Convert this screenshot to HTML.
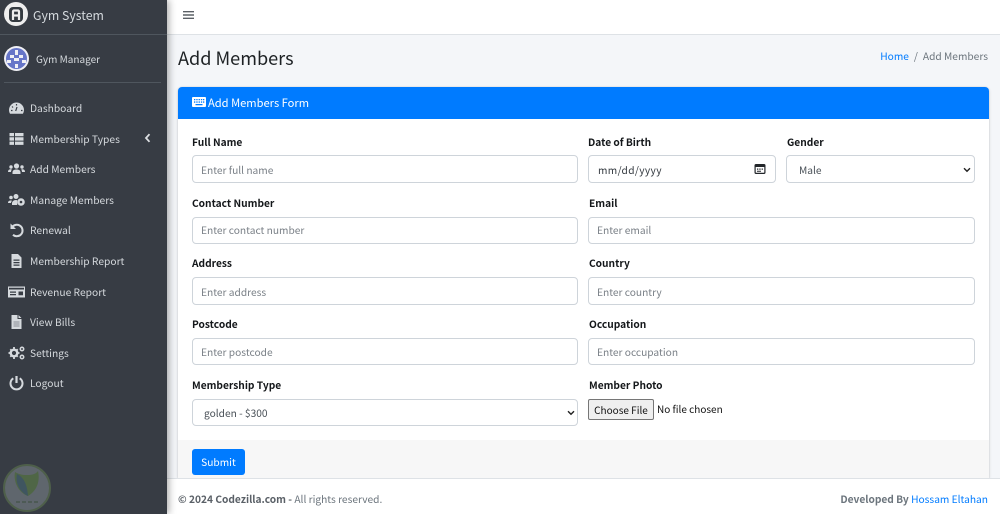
<!DOCTYPE html>
<html lang="en">
<head>
<meta charset="utf-8">
<title>Add Members</title>
<style>
*{box-sizing:border-box}
html,body{margin:0;padding:0;width:1000px;height:514px;overflow:hidden;background:#f4f6f9;font-family:"Noto Sans CJK SC","Liberation Sans",sans-serif}
.a{position:absolute;white-space:nowrap}
#side{position:absolute;z-index:5;left:0;top:0;width:167px;height:514px;background:#373c44;box-shadow:2px 0 7px rgba(0,0,0,.32)}
.nav{position:absolute;left:30px;color:#d6dade;font-size:10.25px;line-height:16px;white-space:nowrap}
.ic{position:absolute;left:8px;width:17px;height:16px;fill:#d6dade}
.lab{position:absolute;font-size:10.2px;font-weight:700;color:#14171a;line-height:16px;white-space:nowrap}
.inp{position:absolute;height:28px;background:#fff;border:1px solid #ced4da;border-radius:4px;font-size:10.2px;line-height:28px;padding-left:8px;color:#7a8087;white-space:nowrap}
.dark{color:#495057}
</style>
</head>
<body>
<div class="a" style="left:167px;top:0;width:833px;height:35px;background:#fff;border-bottom:1px solid #dee2e6"></div>
<svg class="a" style="left:183px;top:10px" width="11" height="10" viewBox="0 0 11 10"><path d="M0 1h11v1.400H0zM0 4.300h11v1.400H0zM0 7.600h11V9H0z" fill="#5b6066"/></svg>

<div id="side">
  <div class="a" style="left:0;top:34px;width:167px;height:1px;background:#4f565e"></div>
  <svg class="a" style="left:4px;top:2px" width="24" height="24" viewBox="0 0 24 24"><circle cx="12" cy="12" r="12" fill="#eeeeee"/><rect x="5" y="5" width="14" height="15" rx="4" fill="#343a40"/><path d="M9 18V9.500a1 1 0 0 1 1-1h4a1 1 0 0 1 1 1V18M9 13.500h6" fill="none" stroke="#eeeeee" stroke-width="2.200"/></svg>
  <div class="a" style="left:33px;top:6px;color:#d5dade;font-size:12.3px;line-height:18px">Gym System</div>
  <svg class="a" style="left:4px;top:46px" width="25" height="25" viewBox="0 0 25 25"><circle cx="12.500" cy="12.500" r="12.500" fill="#f0f0f5"/><circle cx="12.500" cy="12.500" r="10.500" fill="#6675c8"/><path d="M6 9h4v3H6zM15 9h4v3h-4zM11 4h3v5h-3zM10 12h5v3h-5zM3 14h4v3H3zM18 14h4v3h-4zM11 18h3v4h-3z" fill="#f0f0f5"/></svg>
  <div class="a" style="left:36px;top:51px;color:#d6dade;font-size:10px;line-height:16px">Gym Manager</div>
  <div class="a" style="left:4px;top:82px;width:157px;height:1px;background:#4f565e"></div>

  <svg class="ic" style="top:100px" viewBox="0 0 17 16"><path d="M8.500 2.500a7.500 7.500 0 0 0-7.500 7.500c0 1.400.4 2.700 1.100 3.800h12.800A7.500 7.500 0 0 0 16 10a7.500 7.500 0 0 0-7.500-7.500z"/><path d="M9 7l-1.300 4M8.500 4v1.500M4 6.500l1 1M3 10.500h1.500M13 10.500h1.500" stroke="#373c44" stroke-width="1.200" fill="none"/></svg>
  <div class="nav" style="top:100px">Dashboard</div>

  <svg class="ic" style="top:131px" viewBox="0 0 17 16"><path d="M1.500 2h4.500v3.300H1.500zM7 2h8.500v3.300H7zM1.500 6.300h4.500v3.300H1.500zM7 6.300h8.500v3.300H7zM1.500 10.600h4.500v3.300H1.500zM7 10.600h8.500v3.300H7z"/></svg>
  <div class="nav" style="top:131px">Membership Types</div>
  <svg class="a" style="left:144px;top:133px" width="7" height="10" viewBox="0 0 7 10"><path d="M5.500 1.200L2 5l3.500 3.800" fill="none" stroke="#dde0e3" stroke-width="1.800"/></svg>

  <svg class="ic" style="top:161px" viewBox="0 0 17 16"><circle cx="8.500" cy="5" r="2.600"/><circle cx="3" cy="6" r="1.700"/><circle cx="14" cy="6" r="1.700"/><path d="M4.500 13v-1.500C4.500 9.500 6 8.500 8.500 8.500s4 1 4 3V13zM0 11c0-1.800 1-2.700 3-2.700l.9.300c-.6.700-.9 1.500-.9 2.400zM17 11c0-1.800-1-2.700-3-2.700l-.9.300c.6.700.9 1.500.9 2.400z"/></svg>
  <div class="nav" style="top:161px">Add Members</div>

  <svg class="ic" style="top:192px" viewBox="0 0 17 16"><circle cx="3" cy="5.500" r="1.800"/><circle cx="8" cy="4.500" r="2.500"/><path d="M0 11c0-1.800 1-2.500 3-2.500l1 .3C3.500 9.500 3 10.300 3 11zM4 13v-1.500C4 9.500 5.500 8 8 8l1.200.2V13z"/><circle cx="13" cy="10" r="3.800"/><circle cx="13" cy="10" r="1.300" fill="#373c44"/></svg>
  <div class="nav" style="top:192px">Manage Members</div>

  <svg class="ic" style="top:222px" viewBox="0 0 17 16"><path d="M4 5.500A5.700 5.700 0 1 1 5 12.700" fill="none" stroke="#d6dade" stroke-width="2"/><path d="M2.500 1.500v5.500H8z"/></svg>
  <div class="nav" style="top:222px">Renewal</div>

  <svg class="ic" style="top:253px" viewBox="0 0 17 16"><path fill-rule="evenodd" d="M3.500 1h6.500l3.500 3.500V15h-10zM5.500 6.500v1.200h6V6.500zM5.500 9v1.200h6V9zM5.500 11.500v1.200h6v-1.200z"/></svg>
  <div class="nav" style="top:253px">Membership Report</div>

  <svg class="ic" style="top:284px" viewBox="0 0 17 16"><path fill-rule="evenodd" d="M0 2.500h17v11H0zM1 5.500h15V3.800H1zM2 7.500v1.300h6V7.500zM2 10v1.300h6V10zM10.500 7.500v3.800h4.500V7.500z"/></svg>
  <div class="nav" style="top:284px">Revenue Report</div>

  <svg class="ic" style="top:314px" viewBox="0 0 17 16"><path d="M3.500 1h6v4h4v10h-10zM10.500 1l3 3h-3z"/><path d="M5.500 8h6M5.500 10h6M5.500 12h6" stroke="#8a8f96" stroke-width=".9"/></svg>
  <div class="nav" style="top:314px">View Bills</div>

  <svg class="ic" style="top:345px" viewBox="0 0 17 16"><circle cx="6" cy="8" r="3.300" fill="none" stroke="#d6dade" stroke-width="2.400"/><path d="M6 2v2.500M6 11.500V14M.5 8H3M9 8h2.500M2.300 4.300l1.500 1.500M8.200 10.200l1.500 1.500M2.300 11.700l1.500-1.500M8.200 5.800l1.500-1.500" stroke="#d6dade" stroke-width="1.800"/><circle cx="14" cy="4" r="1.700" fill="none" stroke="#d6dade" stroke-width="1.500"/><circle cx="14" cy="12" r="1.700" fill="none" stroke="#d6dade" stroke-width="1.500"/></svg>
  <div class="nav" style="top:345px">Settings</div>

  <svg class="ic" style="top:375px" viewBox="0 0 17 16"><path d="M5.300 3.300a6 6 0 1 0 6.400 0" fill="none" stroke="#d6dade" stroke-width="2"/><path d="M8.500 1v7" stroke="#d6dade" stroke-width="2.200"/></svg>
  <div class="nav" style="top:375px">Logout</div>

  <svg class="a" style="left:2px;top:463px" width="49" height="50" viewBox="0 0 49 50"><circle cx="25" cy="25" r="23" fill="#5f666d" stroke="#4e5f4a" stroke-width="2"/><path d="M13 9c5 3 9 3 12 3s8 0 11-4c2 9 0 19-10 25C17 30 11 19 13 9z" fill="#4f6646"/><path d="M15 11c6 3 10 9 11 22-8-4-13-12-11-22z" fill="#3f5560"/><path d="M14 39h22" stroke="#4d5a55" stroke-width="2" stroke-dasharray="4 2"/></svg>
</div>

<div class="a" style="left:178px;top:45px;font-size:18.100px;line-height:27px;color:#1d2124">Add Members</div>
<div class="a" style="right:12px;top:48px;font-size:10.200px;line-height:16px;color:#6c757d"><span style="color:#007bff">Home</span><span style="margin:0 5px">/</span>Add Members</div>

<div class="a" style="left:178px;top:87px;width:811px;height:391px;background:#fff;border-radius:4px 4px 0 0;box-shadow:0 0 1px rgba(0,0,0,.2),0 1px 3px rgba(0,0,0,.15)"></div>
<div class="a" style="left:178px;top:87px;width:811px;height:32px;background:#007bff;border-radius:4px 4px 0 0"></div>
<svg class="a" style="left:192px;top:97px" width="14" height="10" viewBox="0 0 14 10"><path fill-rule="evenodd" d="M1 0h12a1 1 0 0 1 1 1v8a1 1 0 0 1-1 1H1a1 1 0 0 1-1-1V1a1 1 0 0 1 1-1zM2 2v1.300h1.300V2zM4.300 2v1.300h1.300V2zM6.600 2v1.300h1.300V2zM8.900 2v1.300h1.300V2zM11 2v1.300h1.300V2zM2 4.400v1.300h1.300V4.400zM4.300 4.400v1.300h1.300V4.400zM6.600 4.400v1.300h1.300V4.400zM8.900 4.400v1.300h1.300V4.400zM11 4.400v1.300h1.300V4.400zM3.500 7v1.200h7V7z" fill="#fff"/></svg>
<div class="a" style="left:208px;top:94px;color:#fff;font-size:11.150px;line-height:18px">Add Members Form</div>

<div class="lab" style="left:192px;top:134px">Full Name</div>
<div class="inp" style="left:192px;top:155px;width:386px">Enter full name</div>
<div class="lab" style="left:588px;top:134px">Date of Birth</div>
<div class="inp dark" style="left:588px;top:155px;width:188px;padding-left:9px;color:#343a40;letter-spacing:.35px">mm/dd/yyyy</div>
<svg class="a" style="left:754px;top:163px" width="12" height="12" viewBox="0 0 12 12"><path fill-rule="evenodd" d="M2 1h8a1.500 1.500 0 0 1 1.500 1.500v7A1.500 1.500 0 0 1 10 11H2A1.500 1.500 0 0 1 .5 9.500v-7A1.500 1.500 0 0 1 2 1zM1.700 4v5.300c0 .3.200.5.500.5h7.600c.3 0 .5-.2.500-.5V4zM3 5.500h1.300v1.200H3zM5.300 5.500h1.300v1.200H5.300zM7.600 5.500h1.300v1.200H7.600zM3 7.700h4v1H3z" fill="#22262a"/></svg>
<div class="lab" style="left:787px;top:134px">Gender</div>
<div class="inp dark" style="left:786px;top:155px;width:189px;padding-left:12px">Male</div>
<svg class="a" style="left:963px;top:167px" width="8" height="6" viewBox="0 0 8 6"><path d="M1 1.200l3 3 3-3" fill="none" stroke="#222" stroke-width="1.400"/></svg>

<div class="lab" style="left:192px;top:195px">Contact Number</div>
<div class="inp" style="left:192px;top:217px;width:386px;height:27px;line-height:24px">Enter contact number</div>
<div class="lab" style="left:589px;top:195px">Email</div>
<div class="inp" style="left:588px;top:217px;width:387px;height:27px;line-height:24px">Enter email</div>

<div class="lab" style="left:192px;top:255px">Address</div>
<div class="inp" style="left:192px;top:277px;width:386px">Enter address</div>
<div class="lab" style="left:589px;top:255px">Country</div>
<div class="inp" style="left:588px;top:277px;width:387px">Enter country</div>

<div class="lab" style="left:192px;top:316px">Postcode</div>
<div class="inp" style="left:192px;top:338px;width:386px;height:27px;line-height:25px">Enter postcode</div>
<div class="lab" style="left:589px;top:316px">Occupation</div>
<div class="inp" style="left:588px;top:338px;width:387px;height:27px;line-height:25px">Enter occupation</div>

<div class="lab" style="left:192px;top:377px">Membership Type</div>
<div class="inp dark" style="left:192px;top:399px;width:386px;height:27px;line-height:25px;padding-left:11px">golden - $300</div>
<svg class="a" style="left:567px;top:410px" width="8" height="6" viewBox="0 0 8 6"><path d="M1 1.200l3 3 3-3" fill="none" stroke="#222" stroke-width="1.400"/></svg>
<div class="lab" style="left:589px;top:377px">Member Photo</div>
<div class="a" style="left:588px;top:399px;width:66px;height:21px;background:#efefef;border:1px solid #767676;border-radius:2px;font-size:10px;line-height:20px;text-align:center;color:#111">Choose File</div>
<div class="a" style="left:657px;top:401px;font-size:10px;line-height:16px;color:#111">No file chosen</div>

<div class="a" style="left:178px;top:440px;width:811px;height:38px;background:#f7f7f7"></div>
<div class="a" style="left:192px;top:449px;width:53px;height:26px;background:#007bff;border-radius:3px;color:#fff;font-size:10.200px;line-height:26px;text-align:center">Submit</div>

<div class="a" style="left:167px;top:478px;width:833px;height:36px;background:#fff;border-top:1px solid #dee2e6"></div>
<div class="a" style="left:178px;top:491px;font-size:10.200px;line-height:16px;color:#6c757d"><b style="color:#5a6067">© 2024 Codezilla.com -</b> All rights reserved.</div>
<div class="a" style="right:12px;top:491px;font-size:10.200px;line-height:16px;color:#6c757d"><b>Developed By</b> <span style="color:#007bff">Hossam Eltahan</span></div>
</body>
</html>
